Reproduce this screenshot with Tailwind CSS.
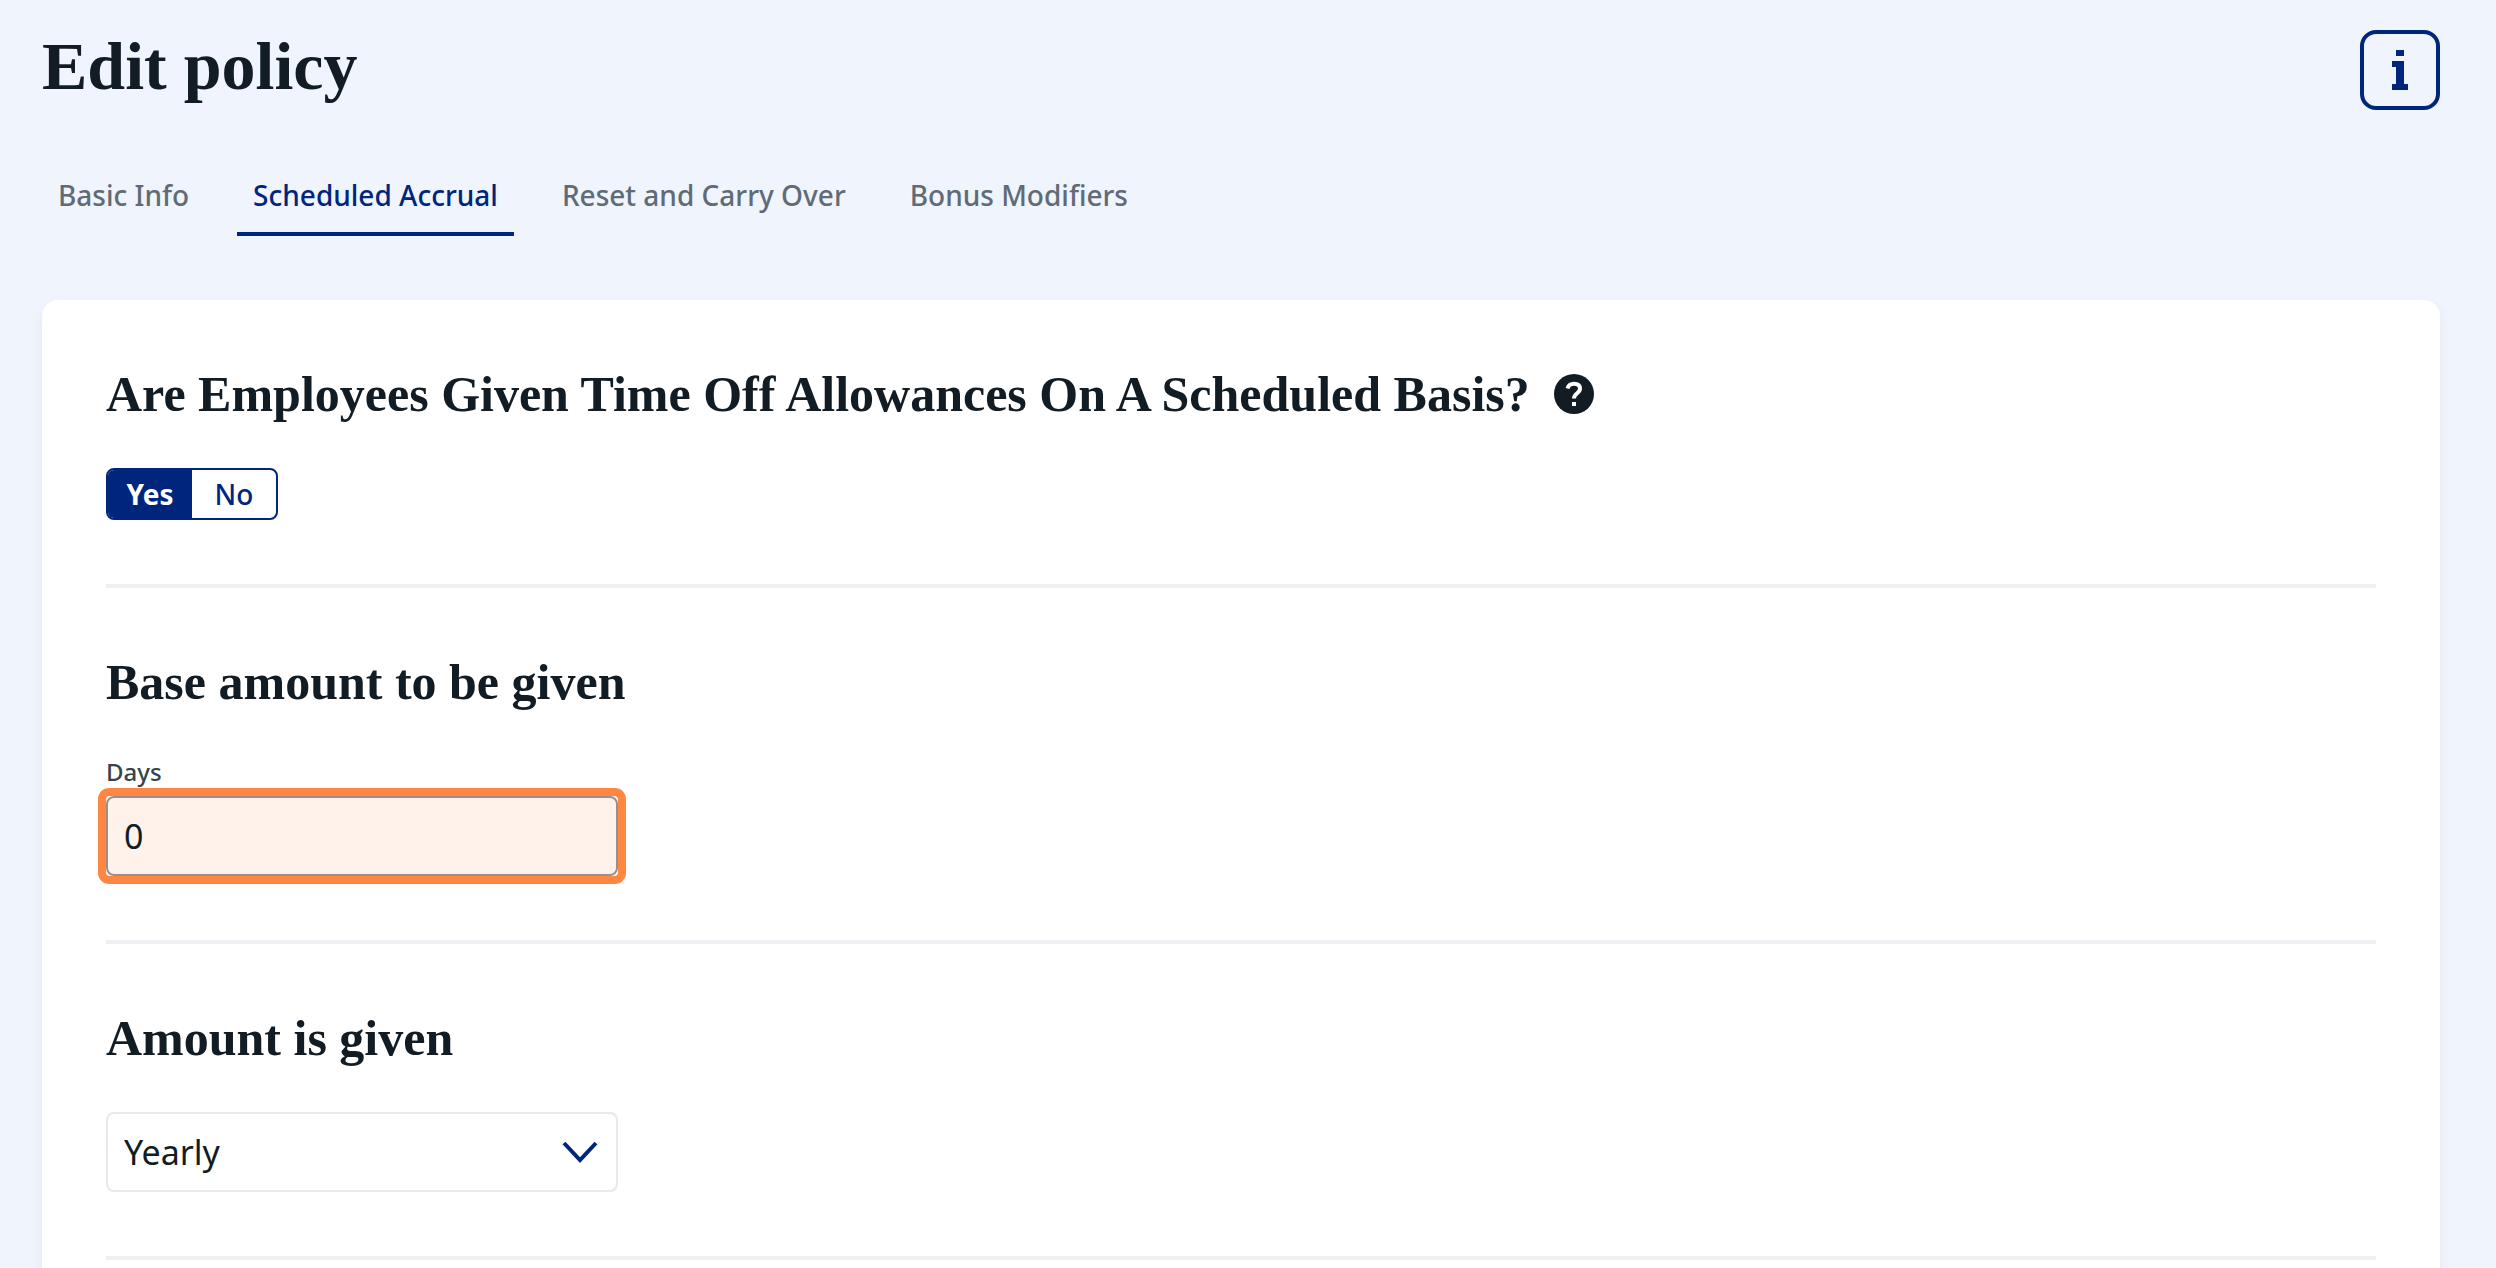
<!DOCTYPE html>
<html lang="en">
<head>
    <meta charset="UTF-8">
    <meta name="viewport" content="width=device-width, initial-scale=1.0">
    <title>Edit policy</title>
    <script src="https://cdn.jsdelivr.net/npm/@tailwindcss/browser@4"></script>
</head>
<body class="bg-[#f0f4fc] text-[#121c24] font-['Noto_Sans','Open_Sans',sans-serif] min-h-screen overflow-hidden pl-[42px] pr-14 pt-[30px]">
    <header class="flex justify-between items-start">
        <h1 class="font-['Liberation_Serif',serif] font-bold text-[68px] leading-[72px]">Edit policy</h1>
        <button type="button" aria-label="Information" class="w-20 h-20 flex items-center justify-center border-4 border-[#00257c] rounded-2xl text-[#00257c]">
            <svg class="w-4 h-10" viewBox="0 0 16 40" fill="currentColor" aria-hidden="true">
                <path d="M4 0h8v6H4zM0 11h12v23h4v6H0v-6h4V17H0z"/>
            </svg>
        </button>
    </header>
    <!-- Tabs -->
    <nav class="flex gap-8 mt-14 text-[28px] leading-[38px] font-medium text-[#5f6b76]">
        <a href="#" class="px-4 pt-[10px] pb-[18px] border-b-4 border-transparent">Basic Info</a>
        <a href="#" class="px-4 pt-[10px] pb-[18px] border-b-4 border-[#00257c] text-[#00257c]" aria-current="page">Scheduled Accrual</a>
        <a href="#" class="px-4 pt-[10px] pb-[18px] border-b-4 border-transparent">Reset and Carry Over</a>
        <a href="#" class="px-4 pt-[10px] pb-[18px] border-b-4 border-transparent">Bonus Modifiers</a>
    </nav>
    <main class="bg-white rounded-2xl shadow-[0_4px_12px_rgba(18,28,36,0.05)] mt-16 px-16 pb-16">
        <!-- Scheduled basis -->
        <section class="py-16 border-b-4 border-[#eef0f3]">
            <div class="flex items-center gap-6">
                <h2 class="font-['Liberation_Serif',serif] font-bold text-[50px] leading-[60px]">Are Employees Given Time Off Allowances On A Scheduled Basis?</h2>
                <button type="button" aria-label="Help">
                    <svg class="w-10 h-10" viewBox="0 0 40 40" fill="none" aria-hidden="true">
                        <circle cx="20" cy="20" r="20" fill="#121c24"/>
                        <path d="M13.500 14.500c1-3.500 3-4.700 6.500-4.700 4 0 6 2 6 5 0 4.600-6 4.400-6 9.700" stroke="#fff" stroke-width="4"/>
                        <path d="M18 28h4v4h-4z" fill="#fff"/>
                    </svg>
                </button>
            </div>
            <div class="flex w-fit mt-11 border-2 border-[#00257c] rounded-lg overflow-hidden text-[28px] leading-[48px]" role="group" aria-label="Scheduled basis">
                <button type="button" class="w-21 bg-[#00257c] text-white font-bold" aria-pressed="true">Yes</button>
                <button type="button" class="w-21 text-[#00257c] font-medium" aria-pressed="false">No</button>
            </div>
        </section>
        <!-- Base amount -->
        <section class="py-16 border-b-4 border-[#eef0f3]">
            <h2 class="font-['Liberation_Serif',serif] font-bold text-[50px] leading-[60px]">Base amount to be given</h2>
            <label for="baseAmount" class="block mt-11 text-[24px] leading-[32px] font-medium text-[#36434f]">Days</label>
            <div class="w-[512px] mt-2 rounded-sm ring-8 ring-[#ff8742] bg-white">
                <input type="text" id="baseAmount" value="0" inputmode="decimal" class="block w-full h-20 px-4 border-2 border-[#9a8f8c] rounded-lg bg-[#fff2ea] text-[34px]">
            </div>
        </section>
        <!-- Frequency -->
        <section class="py-16 border-b-4 border-[#eef0f3]">
            <h2 id="frequencyTitle" class="font-['Liberation_Serif',serif] font-bold text-[50px] leading-[60px]">Amount is given</h2>
            <div class="relative w-[512px] mt-11">
                <select id="frequency" aria-labelledby="frequencyTitle" class="block w-full h-20 px-4 appearance-none border-2 border-[#e8e9eb] rounded-lg bg-white text-[34px]">
                    <option>Yearly</option>
                    <option>Monthly</option>
                    <option>Weekly</option>
                </select>
                <svg class="absolute right-5 top-7 w-9 h-6 pointer-events-none" viewBox="0 0 36 24" fill="none" stroke="#00257c" stroke-width="4" aria-hidden="true">
                    <path d="M2 3l16 17L34 3"/>
                </svg>
            </div>
        </section>
    </main>
</body>
</html>
